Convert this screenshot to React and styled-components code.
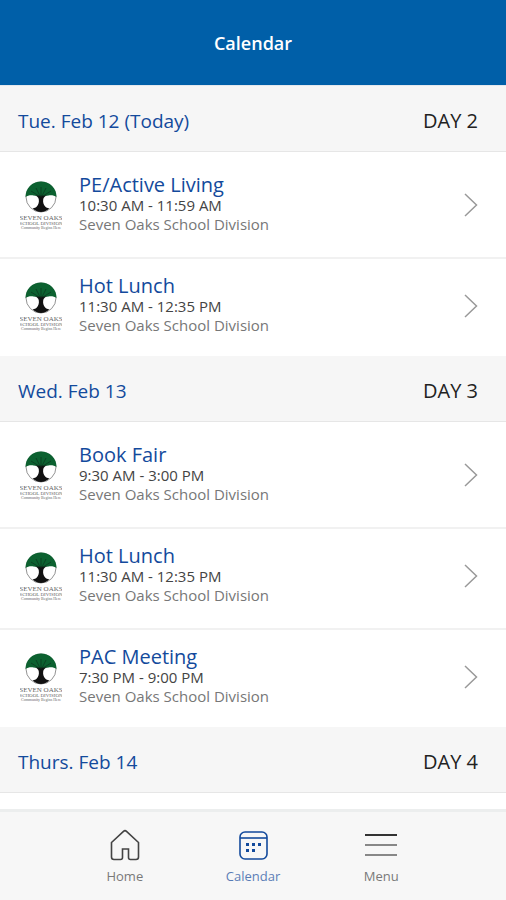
import styled, { createGlobalStyle } from "styled-components";

const days = [
  {
    date: "Tue. Feb 12 (Today)",
    day: "DAY 2",
    events: [
      { title: "PE/Active Living", time: "10:30 AM - 11:59 AM" },
      { title: "Hot Lunch", time: "11:30 AM - 12:35 PM" },
    ],
  },
  {
    date: "Wed. Feb 13",
    day: "DAY 3",
    events: [
      { title: "Book Fair", time: "9:30 AM - 3:00 PM" },
      { title: "Hot Lunch", time: "11:30 AM - 12:35 PM" },
      { title: "PAC Meeting", time: "7:30 PM - 9:00 PM" },
    ],
  },
  { date: "Thurs. Feb 14", day: "DAY 4", events: [] },
];

const SchoolLogo = () => (
  <LogoSvg viewBox="0 0 42 50" aria-hidden="true">
    <circle cx="21" cy="16" r="15" fill="#fff" stroke="#777" strokeWidth="0.8" />
    <path
      d="M5.5 16C5.5 7 12 .5 21 .5S36.5 7 36.5 16c-2-1.400-5-2-8-1.500-4.800.9-10.200.9-15 0-3-.5-6 .1-8 1.500z"
      fill="#0c6130"
    />
    <path
      d="M15 14.500c2 .6 3.500 2 3.800 4 .4 2.800-.3 5.200-2 6.900-1 1-2.300 1.500-4 1.900 2.200 2.500 5 3.700 8.200 3.700s6-1.200 8.200-3.700c-1.700-.4-3-.9-4-1.900-1.700-1.700-2.400-4.100-2-6.900.3-2 1.800-3.400 3.800-4z"
      fill="#111"
    />
    <path
      d="M21 16V6M20 15l-4-8M22 15l4-8M19 15l-8-5M23 15l8-5"
      stroke="#0b3a1f"
      strokeWidth="0.8"
      fill="none"
    />
    <LogoText x="21" y="39" $size={7}>SEVEN OAKS</LogoText>
    <LogoText x="21" y="44" $size={5}>SCHOOL DIVISION</LogoText>
    <LogoText x="21" y="48" $size={4}>Community Begins Here</LogoText>
  </LogoSvg>
);

const Chevron = () => (
  <ChevronSvg viewBox="0 0 14 24" aria-hidden="true">
    <path d="M1 1l11.500 11L1 23" />
  </ChevronSvg>
);

const HomeIcon = () => (
  <NavSvg viewBox="0 0 32 32" aria-hidden="true">
    <path d="M2.500 13.500 14.500 2.300a2.200 2.200 0 0 1 3 0L29.500 13.500V28a2.500 2.500 0 0 1-2.500 2.500h-5.500a2 2 0 0 1-2-2V20h-6v8.500a2 2 0 0 1-2 2H5A2.500 2.500 0 0 1 2.500 28z" />
  </NavSvg>
);

const CalendarIcon = () => (
  <NavSvg viewBox="0 0 32 32" aria-hidden="true">
    <rect x="3" y="3" width="27" height="27" rx="5" />
    <path d="M3 9h27" />
    <g fill="currentColor" stroke="none">
      <rect x="9" y="14" width="3" height="3" />
      <rect x="15" y="14" width="3" height="3" />
      <rect x="21" y="14" width="3" height="3" />
      <rect x="9" y="20" width="3" height="3" />
      <rect x="15" y="20" width="3" height="3" />
    </g>
  </NavSvg>
);

const MenuIcon = () => (
  <NavSvg viewBox="0 0 32 32" aria-hidden="true">
    <path d="M0 6h32" stroke="#333" strokeWidth="2" />
    <path d="M0 16h32M0 26h32" stroke="#888" strokeWidth="2" />
  </NavSvg>
);

const EventRow = ({ event }) => (
  <EventItem>
    <EventLink href="#event">
      <SchoolLogo />
      <EventInfo>
        <EventTitle>{event.title}</EventTitle>
        <EventTime>{event.time}</EventTime>
        <EventPlace>Seven Oaks School Division</EventPlace>
      </EventInfo>
      <Chevron />
    </EventLink>
  </EventItem>
);

const App = () => {
  return (
    <Screen>
      <GlobalStyle />
      <Header>
        <HeaderTitle>Calendar</HeaderTitle>
      </Header>
      <Schedule>
        {days.map((item) => (
          <section key={item.date}>
            <DayHeader>
              <DayDate>{item.date}</DayDate>
              <DayNumber>{item.day}</DayNumber>
            </DayHeader>
            <EventList>
              {item.events.map((event) => (
                <EventRow key={event.title} event={event} />
              ))}
            </EventList>
          </section>
        ))}
      </Schedule>
      <BottomNav>
        <NavLink href="#home">
          <HomeIcon />
          <NavLabel>Home</NavLabel>
        </NavLink>
        <NavLink href="#calendar" $active aria-current="page">
          <CalendarIcon />
          <NavLabel>Calendar</NavLabel>
        </NavLink>
        <NavLink href="#menu">
          <MenuIcon />
          <NavLabel>Menu</NavLabel>
        </NavLink>
      </BottomNav>
    </Screen>
  );
};

const GlobalStyle = createGlobalStyle`
  * {
    box-sizing: border-box;
  }

  body {
    margin: 0;
    background: #fff;
    font-family: "Open Sans", "Noto Sans", sans-serif;
  }
`;

const Screen = styled.div`
  display: flex;
  flex-direction: column;
  height: 100vh;
`;

const Header = styled.header`
  display: flex;
  flex-shrink: 0;
  justify-content: center;
  align-items: center;
  height: 86px;
  border-bottom: 1px solid #e3e8ee;
  background: #005fa8;
`;

const HeaderTitle = styled.h1`
  margin: 0;
  color: #fff;
  font-size: 18px;
  font-weight: 600;
`;

const Schedule = styled.main`
  flex: 1;
  min-height: 0;
  overflow: hidden;
`;

const DayHeader = styled.div`
  display: flex;
  justify-content: space-between;
  align-items: center;
  height: 66px;
  padding: 4px 28px 0 18px;
  border-bottom: 1px solid #e6e6e6;
  background: #f6f6f6;
`;

const DayDate = styled.h2`
  margin: 0;
  color: #134a9c;
  font-size: 19px;
  font-weight: 400;
`;

const DayNumber = styled.span`
  color: #222;
  font-size: 20px;
`;

const EventList = styled.ul`
  margin: 0;
  padding: 0;
  list-style: none;
`;

const EventItem = styled.li`
  padding: 15px 28px 21px 20px;

  &:first-child {
    padding-top: 21px;
  }

  &:not(:last-child) {
    padding-bottom: 23px;
    border-bottom: 2px solid #f1f1f1;
  }
`;

const EventLink = styled.a`
  display: flex;
  align-items: center;
  text-decoration: none;
`;

const EventInfo = styled.div`
  flex: 1;
  margin-left: 17px;
`;

const EventTitle = styled.h3`
  margin: 0;
  color: #134a9c;
  font-size: 20px;
  font-weight: 400;
  line-height: 23px;
`;

const EventTime = styled.p`
  margin: 0;
  color: #444;
  font-size: 15px;
  line-height: 19px;
`;

const EventPlace = styled(EventTime)`
  color: #777;
`;

const LogoSvg = styled.svg`
  width: 42px;
  height: 50px;
  margin-top: 5px;
`;

const LogoText = styled.text`
  fill: #666;
  font-family: "Liberation Serif", serif;
  font-size: ${({ $size }) => $size}px;
  text-anchor: middle;
`;

const ChevronSvg = styled.svg`
  width: 14px;
  height: 24px;
  margin-top: 3px;
  fill: none;
  stroke: #999;
  stroke-width: 1.5;
`;

const BottomNav = styled.nav`
  display: grid;
  grid-template-columns: repeat(3, 1fr);
  flex-shrink: 0;
  height: 91px;
  padding: 17px 12% 0;
  border-top: 3px solid #eceeee;
  background: #f7f7f7;
`;

const NavLink = styled.a`
  display: flex;
  flex-direction: column;
  align-items: center;
  gap: 6px;
  color: ${({ $active }) => ($active ? "#134a9c" : "#444")};
  text-decoration: none;
`;

const NavSvg = styled.svg`
  width: 32px;
  height: 32px;
  fill: none;
  stroke: currentColor;
  stroke-width: 1.6;
`;

const NavLabel = styled.span`
  font-size: 13px;
  line-height: 18px;
  opacity: 0.7;
`;

export default App;
